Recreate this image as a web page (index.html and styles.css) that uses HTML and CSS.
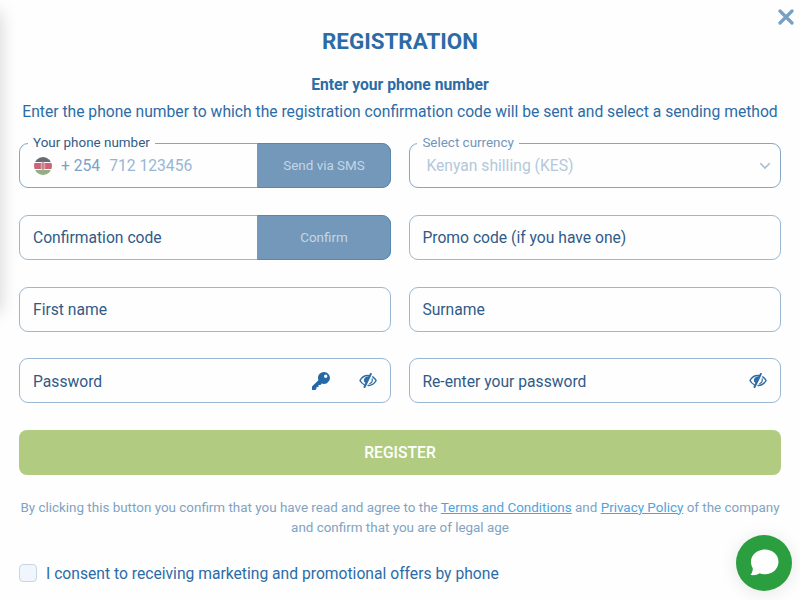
FILE: index.html
```html
<!DOCTYPE html>
<html lang="en">
<head>
  <meta charset="UTF-8">
  <title>Registration</title>
  <link rel="stylesheet" href="styles.css">
</head>
<body>
  <div class="side-shadow"></div>
  <button type="button" class="close" aria-label="Close">
    <svg width="16" height="16" viewBox="0 0 16 16"><path d="M2 2l12 12M14 2L2 14" stroke="#77a0c5" stroke-width="3.2" stroke-linecap="round"/></svg>
  </button>

  <form class="registration">
    <h1>REGISTRATION</h1>
    <h2>Enter your phone number</h2>
    <p class="intro">Enter the phone number to which the registration confirmation code will be sent and select a sending method</p>

    <div class="fields">
      <div class="field active">
        <label class="legend">Your phone number</label>
        <svg class="flag" width="18" height="18" viewBox="0 0 18 18">
          <clipPath id="round"><circle cx="9" cy="9" r="9"/></clipPath>
          <g clip-path="url(#round)">
            <path fill="#fff" d="M0 0h18v18H0z"/>
            <path fill="#686b70" d="M0 0h18v5H0z"/>
            <path fill="#cb6478" d="M0 6h18v6H0z"/>
            <path fill="#92af83" d="M0 13h18v5H0z"/>
            <ellipse cx="9" cy="9" rx="2.3" ry="4.3" fill="#e3b7c0"/>
            <ellipse cx="9" cy="9" rx="1.3" ry="3.7" fill="#b95265"/>
            <path d="M9 5v8" stroke="#f3e3e7" stroke-width=".7"/>
          </g>
        </svg>
        <span class="code">+ 254</span>
        <span class="number">712 123456</span>
        <button type="button" class="action">Send via SMS</button>
      </div>
      <div class="field active currency">
        <label class="legend">Select currency</label>
        <span class="value">Kenyan shilling (KES)</span>
        <svg class="arrow" width="12" height="8" viewBox="0 0 12 8"><path d="M1.3 1.2L6 6l4.7-4.8" fill="none" stroke="#a3bdd5" stroke-width="1.6"/></svg>
      </div>

      <div class="field">
        <label>Confirmation code</label>
        <button type="button" class="action">Confirm</button>
      </div>
      <div class="field"><label>Promo code (if you have one)</label></div>

      <div class="field"><label>First name</label></div>
      <div class="field"><label>Surname</label></div>

      <div class="field">
        <label>Password</label>
        <div class="icons">
          <svg width="18" height="18" viewBox="0 0 18 18" fill="#2668a5"><path fill-rule="evenodd" d="M12 0a6 6 0 1 1-2.2 11.6L8.500 13H6.500v2H4.500v1.700L3.200 18H0v-3.500l6.400-6.300A6 6 0 0 1 12 0zm1.700 2.600a1.700 1.700 0 1 0 0 3.400 1.700 1.700 0 0 0 0-3.400z"/></svg>
          <svg class="eye" width="18" height="16" viewBox="0 0 18 16"><use href="#eye-off"/></svg>
        </div>
      </div>
      <div class="field">
        <label>Re-enter your password</label>
        <div class="icons">
          <svg class="eye" width="18" height="16" viewBox="0 0 18 16">
            <g id="eye-off" fill="none" stroke="#2f6da7" stroke-width="1.5" stroke-linecap="round">
              <path d="M10.500 2.700C6 2 2.800 4.300 1 7.500c1 1.900 2.500 3.400 4.200 4.100M13.800 3.900c1.400.9 2.500 2.100 3.300 3.600-1.700 3.100-4.500 5-8 4.900"/>
              <path d="M11.800 1L5.500 14" stroke-width="2"/>
              <path d="M13.200 5.800c.4 2.100-.6 3.900-2.400 4.700" stroke-width="1.2"/>
              <path d="M11 3.200C6.500 2.800 4 5.800 5.200 8.800l1.800 1.800z" fill="#2f6da7" stroke="none"/>
            </g>
          </svg>
        </div>
      </div>
    </div>

    <button type="submit" class="register">REGISTER</button>

    <p class="terms">By clicking this button you confirm that you have read and agree to the <a href="#">Terms and Conditions</a> and <a href="#">Privacy Policy</a> of the company<br>and confirm that you are of legal age</p>

    <label class="consent">
      <input type="checkbox">
      <span>I consent to receiving marketing and promotional offers by phone</span>
    </label>
  </form>

  <button type="button" class="chat" aria-label="Chat">
    <svg width="30" height="28" viewBox="0 0 30 28"><path fill="#fff" d="M16 .5c7.500 0 13.500 5.200 13.500 12.200S23.500 25.300 16 25.300c-1.900 0-3.700-.3-5.300-1.100-2.300 1.600-5.300 2.300-9.200 1.800 1.600-2 2.400-4.500 2.300-6.800C2.600 17.200 2 15.100 2 12.700 2 5.700 8.500.5 16 .5z"/></svg>
  </button>
</body>
</html>
```

FILE: styles.css
```css
* {
  box-sizing: border-box;
}
body {
  margin: 0;
  height: 600px;
  overflow: hidden;
  background: #fefefe;
  font-family: Roboto, sans-serif;
  font-size: 15.66px;
  color: #2c6ca6;
}
button {
  font-family: inherit;
  padding: 0;
  border: none;
  cursor: pointer;
}
h1,
h2,
p {
  margin: 0;
  text-align: center;
}
.side-shadow {
  position: absolute;
  left: -20px;
  top: 12px;
  width: 20px;
  height: 300px;
  box-shadow: 0 0 18px rgba(0, 0, 0, 0.18);
}
.close {
  position: absolute;
  top: 9px;
  right: 6px;
  width: 16px;
  height: 16px;
  background: none;
}
.close svg {
  display: block;
}
.registration {
  padding: 25px 19px 0;
}
h1 {
  font-size: 22.4px;
  line-height: 32px;
  font-weight: 700;
}
h2 {
  margin-top: 16px;
  font-size: 15.66px;
  line-height: 24px;
  font-weight: 700;
}
.intro {
  margin: 3px -10px 0;
  line-height: 24px;
  white-space: nowrap;
}
.fields {
  display: grid;
  grid-template-columns: 1fr 1fr;
  grid-auto-rows: 45px;
  gap: 26.7px 18px;
  margin-top: 19.3px;
}
.field {
  position: relative;
  display: flex;
  align-items: center;
  padding: 1px 0 0 13px;
  border: 1px solid #9bb8d3;
  border-radius: 9px;
  color: #315b87;
}
.field:nth-child(even) {
  padding-left: 12.4px;
}
.field.active {
  padding-top: 0;
  border-color: #84a7c7;
}
.legend {
  position: absolute;
  left: 8px;
  top: -10px;
  padding: 0 5px;
  background: #fefefe;
  font-size: 13.43px;
  line-height: 18px;
}
.currency .legend {
  left: 7.4px;
  color: #7097bb;
}
.flag {
  flex: none;
  margin-left: 1px;
  margin-right: 9px;
}
.code {
  color: #7ba2c8;
  margin-right: 9px;
}
.number {
  color: #98b6d3;
}
.value {
  margin-left: 4px;
  color: #b3c8db;
}
.arrow {
  margin-left: auto;
  margin-right: 9px;
}
.action {
  align-self: stretch;
  width: 134px;
  margin: -1px -1px -1px auto;
  border: 1px solid #5886b0;
  border-left-color: #7398ba;
  border-radius: 0 9px 9px 0;
  background: #7398ba;
  color: #c5d6e5;
  font-size: 13.43px;
}
.field:not(.active) .action {
  margin-top: -2px;
}
.icons {
  display: flex;
  align-items: center;
  gap: 29px;
  margin-left: auto;
  margin-right: 13.5px;
}
.register {
  display: block;
  width: 100%;
  height: 45px;
  margin-top: 26.3px;
  border-radius: 8px;
  background: #b1cc80;
  color: #fff;
  font-size: 15.66px;
  font-weight: 500;
}
.terms {
  margin: 23px -10px 0;
  color: #81a3c2;
  font-size: 13.43px;
  line-height: 20px;
  white-space: nowrap;
}
.terms a {
  color: #4fa3dc;
}
.consent {
  display: flex;
  align-items: center;
  gap: 9px;
  margin-top: 26px;
}
.consent input {
  appearance: none;
  width: 18px;
  height: 18px;
  margin: 0;
  border: 1px solid #c6d6e4;
  border-radius: 4px;
  background: #f1f6fe;
}
.chat {
  position: absolute;
  right: 8px;
  bottom: 9px;
  display: flex;
  align-items: center;
  justify-content: center;
  width: 56px;
  height: 56px;
  border-radius: 50%;
  background: #2b9f40;
  box-shadow: 0 2px 18px rgba(0, 0, 0, 0.1);
}
```
